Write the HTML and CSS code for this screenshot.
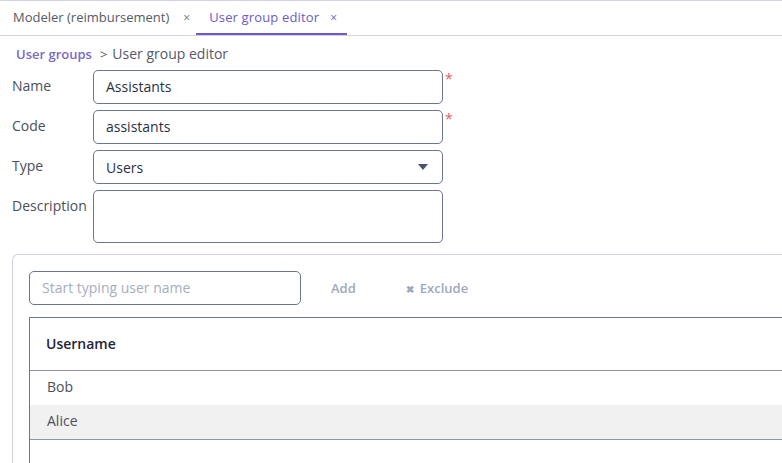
FILE: index.html
```html
<!DOCTYPE html>
<html>
<head>
<meta charset="utf-8">
<link rel="stylesheet" href="styles.css">
</head>
<body>
<div class="tabs">
  <div class="tab"><span>Modeler (reimbursement)</span><span class="close">×</span></div>
  <div class="tab active"><span>User group editor</span><span class="close">×</span></div>
</div>
<div class="crumbs"><a class="crumb-link">User groups</a><span class="sep">&gt;</span><span>User group editor</span></div>
<div class="form">
  <div class="row"><label>Name</label><div class="input">Assistants</div><span class="req">*</span></div>
  <div class="row"><label>Code</label><div class="input">assistants</div><span class="req">*</span></div>
  <div class="row"><label>Type</label><div class="input select">Users<svg class="caret" width="10" height="6" viewBox="0 0 10 6"><path d="M0 0h10L5 6z" fill="#4a5270"/></svg></div></div>
  <div class="row"><label>Description</label><div class="input textarea"></div></div>
</div>
<div class="panel">
  <div class="toolbar">
    <div class="search">Start typing user name</div>
    <span class="btn">Add</span>
    <span class="btn"><span class="x">✖</span>Exclude</span>
  </div>
  <div class="table">
    <div class="thead">Username</div>
    <div class="tr">Bob</div>
    <div class="tr alt">Alice</div>
  </div>
</div>
</body>
</html>
```
FILE: styles.css
```css
* { box-sizing: border-box; }
html, body { margin: 0; padding: 0; background: #fff; overflow: hidden; }
body { font-family: "Open Sans", "Noto Sans", sans-serif; font-size: 14px; color: #3b3f4c; width: 782px; height: 463px; }
.tabs { display: flex; height: 36px; border-top: 1px solid #d3cfe9; border-bottom: 1px solid #d3cfe9; padding-left: 4px; font-size: 13px; }
.tab { display: flex; align-items: center; padding: 0 6px 0 9px; color: #555a66; height: 34px; border-bottom: 2px solid transparent; }
.tab .close { margin-left: 14px; font-size: 12px; color: #777; }
.tab.active { color: #6a5acd; border-bottom-color: #6a5acd; padding: 0 10px 0 13px; letter-spacing: 0.15px; }
.tab.active .close { color: #6a5acd; margin-left: 11px; }
.crumbs { padding: 8px 0 0 16px; height: 34px; color: #555a66; }
.crumb-link { color: #7a68c8; font-weight: 600; font-size: 13px; }
.sep { margin: 0 5px 0 8px; font-size: 13px; }
.form { padding-left: 12px; }
.row { display: flex; align-items: flex-start; margin-bottom: 6px; }
.row label { width: 81px; padding-top: 6px; color: #4a4f5c; }
.input { width: 350px; height: 34px; border: 1px solid #6b7591; border-radius: 5px; padding: 6px 12px; color: #2a2f45; position: relative; }
.select { display: flex; justify-content: space-between; align-items: center; padding-top: 0; padding-bottom: 0; padding-right: 14px; }
.textarea { height: 53px; }
.req { color: #e85a5a; margin-left: 2px; font-size: 14px; line-height: 14px; margin-top: 2px; }
.panel { margin: 11px 0 0 12px; border: 1px solid #d3cfe9; border-right: none; border-bottom: none; border-top-left-radius: 6px; padding: 16px 0 0 16px; height: 209px; overflow: hidden; display: flex; flex-direction: column; }
.toolbar { display: flex; align-items: center; }
.search { width: 272px; height: 34px; border: 1px solid #6b7591; border-radius: 5px; padding: 6px 12px; color: #a7adbd; }
.btn { color: #a0a8bd; font-weight: 600; margin-left: 30px; font-size: 13px; }
.btn + .btn { margin-left: 50px; }
.x { font-size: 10px; margin-right: 6px; }
.table { margin-top: 12px; border-top: 1px solid #6b7591; border-left: 1px solid #6b7591; flex: 1; }
.thead { height: 53px; padding: 16px 0 0 16px; font-weight: 600; color: #1f2437; border-bottom: 1px solid #8c94aa; }
.tr { height: 34px; padding: 6px 0 0 17px; color: #4a4f5c; }
.tr.alt { background: #f1f1f1; border-bottom: 1px solid #8c94aa; height: 35px; }
```
